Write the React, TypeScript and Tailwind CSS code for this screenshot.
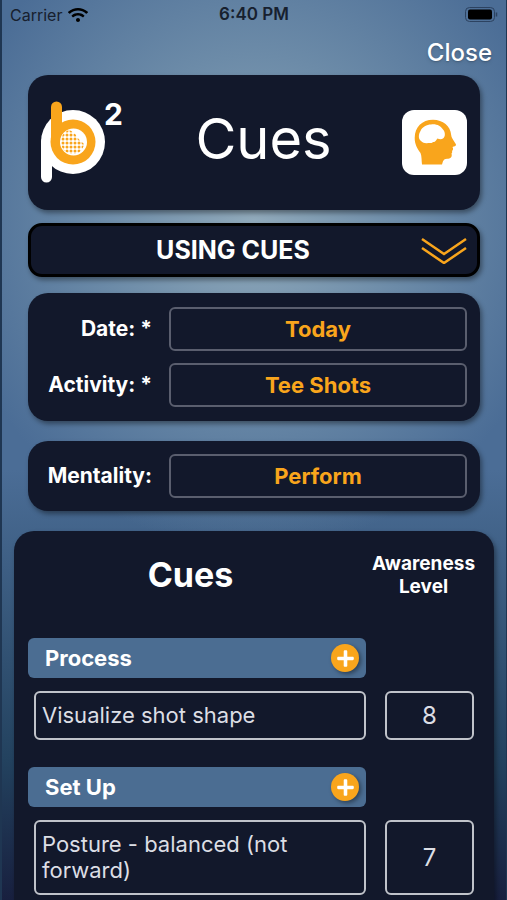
import React from 'react';
import { FaPlus, FaWifi } from 'react-icons/fa';

const sections = [
  { title: 'Process', cue: 'Visualize shot shape', rows: 1, level: '8' },
  { title: 'Set Up', cue: 'Posture - balanced (not forward)', rows: 2, level: '7' },
];

const Logo: React.FC = () => (
  <svg width="84" height="104" viewBox="0 -10 84 104" className="overflow-visible" role="img" aria-label="pb squared">
    <defs>
      <pattern id="dimples" width="4" height="4" patternUnits="userSpaceOnUse">
        <circle cx="2" cy="2" r="1.5" fill="#f9a51c" />
      </pattern>
    </defs>
    <circle cx="32" cy="41" r="32" fill="#fff" />
    <path d="M5.500 41V76" stroke="#fff" strokeWidth="11" strokeLinecap="round" />
    <circle cx="32" cy="41" r="22.500" fill="#f9a51c" />
    <path d="M15.500 6V41" stroke="#f9a51c" strokeWidth="11" strokeLinecap="round" />
    <circle cx="32.500" cy="41" r="13.500" fill="#fff" />
    <path d="M28 29C31 30 34 32 36 36C38 39 41 41 43 43C42 49 38 53 32 53C25 53 20 48 20 41C20 35 23 31 28 29Z" fill="url(#dimples)" />
    <text x="63" y="24" fill="#fff" fontFamily="Inter, sans-serif" fontSize="30" fontWeight="700">2</text>
  </svg>
);

const HeadIcon: React.FC = () => (
  <svg className="size-[65px] shrink-0 rounded-xl bg-white" viewBox="0 0 65 65" aria-hidden="true">
    <path
      d="M20 54.500C19.500 51 19.800 46 18.500 43C15 38 12.700 34 12.700 28C12.700 17 20 9.700 31 9.700C41 9.700 48.500 16 49.200 25C49.300 28 53 32 54 34.500C54.300 36 52 36.500 50.500 37C51.500 39 51 40 50 41C50.500 42 50 43 49.500 43.500C50.500 47 48.500 48.800 45 48.800C41 48.800 41 52 40 54.500Z"
      fill="#f9a51c"
    />
    <path
      d="M19 31C16 29 16.500 24 18.500 21C20 17 25 14.500 29 14.500C34 13.500 39 16 41 19.500C43.500 22 43.500 27 41 28.500C39 30 37 29 35.500 28.500C34 30 34 32 31 32C29.500 34 28 32.500 26 33C23.500 33.500 21 33 19 31Z"
      fill="#fff"
    />
  </svg>
);

const Field: React.FC<{ id: string; label: string; value: string }> = ({ id, label, value }) => (
  <div className="flex items-center">
    <label htmlFor={id} className="w-[111px] shrink-0 text-right text-[21px] font-bold whitespace-nowrap">
      {label}
    </label>
    <input
      id={id}
      type="text"
      defaultValue={value}
      className="ml-[17px] h-11 min-w-0 flex-1 rounded-md border-2 border-[#5a5e6e] bg-transparent text-center text-[22px] font-bold text-[#f9a51c]"
    />
  </div>
);

const App: React.FC = () => {
  return (
    <div className="flex min-h-screen flex-col border-r border-l-2 border-[#1f3652] bg-[radial-gradient(ellipse_310px_330px_at_50%_220px,#91aabb_0%,#6c8ba8_50%,#4b6d9600_100%),linear-gradient(to_bottom,#4b6d96_0px,#4b6d96_470px,#23425f_760px,#18203f_900px)] font-['Inter',sans-serif] text-white">
      {/* Status bar */}
      <div className="grid h-[30px] grid-cols-3 items-center pr-2 pl-2 text-[17px] text-[#17202e]">
        <div className="flex items-center gap-[6px] text-base">
          Carrier
          <FaWifi size={20} className="text-black" />
        </div>
        <span className="text-center font-semibold">6:40 PM</span>
        <svg className="justify-self-end" width="33" height="16" viewBox="0 0 33 16" aria-hidden="true">
          <rect x="0.500" y="0.500" width="29" height="14" rx="4" fill="none" stroke="#2c4260" />
          <rect x="3" y="2.500" width="24" height="10" rx="2" fill="#000" />
          <path d="M31.500 5.500v4" stroke="#2c4260" strokeWidth="1.500" />
        </svg>
      </div>

      <div className="flex h-[45px] items-center justify-end pr-[14px]">
        <button type="button" className="text-2xl font-medium text-shadow-md">Close</button>
      </div>

      <header className="mx-[26px] flex h-[135px] items-center rounded-[20px] bg-[#12182b] px-[13px] shadow-[2px_3px_5px_#0006]">
        <Logo />
        <h1 className="flex-1 pb-2 text-center text-[56px]">Cues</h1>
        <HeadIcon />
      </header>

      <button
        type="button"
        className="mx-[26px] mt-[13px] flex h-[54px] items-center rounded-[14px] border-3 border-black bg-[#12182b] px-[10px] shadow-[2px_3px_5px_#0006]"
      >
        <span className="flex-1 pt-[2px] pl-1 text-[25px] font-bold">USING CUES</span>
        <svg width="46" height="28" viewBox="0 0 46 28" fill="none" stroke="#f9a51c" strokeWidth="2.500" aria-hidden="true">
          <path d="M1 3L23 18L45 3M1 12L23 27L45 12" />
        </svg>
      </button>

      {/* Session details */}
      <section className="mx-[26px] mt-4 flex flex-col gap-3 rounded-[20px] bg-[#12182b] px-[13px] py-[14px] shadow-[2px_3px_5px_#0006]">
        <Field id="date" label="Date: *" value="Today" />
        <Field id="activity" label="Activity: *" value="Tee Shots" />
      </section>
      <section className="mx-[26px] mt-5 rounded-[20px] bg-[#12182b] p-[13px] shadow-[2px_3px_5px_#0006]">
        <Field id="mentality" label="Mentality:" value="Perform" />
      </section>

      {/* Cue list */}
      <section className="mx-3 mt-5 flex-1 rounded-t-[20px] bg-[#12182b] pb-1 shadow-[2px_3px_5px_#0006]">
        <div className="flex items-center pt-[21px] pr-[14px] pb-10">
          <h2 className="flex-1 text-center text-[34px] leading-[46px] font-bold">Cues</h2>
          <p className="w-[113px] text-center text-[19px] leading-[23px] font-bold">Awareness Level</p>
        </div>
        <div className="flex flex-col gap-[27px] pr-5 pl-[14px]">
          {sections.map((s) => (
            <div key={s.title}>
              <div className="mr-[108px] flex h-10 items-center justify-between rounded-md bg-[#4b6d92] pr-[7px] pl-[17px]">
                <h3 className="text-[22px] font-bold">{s.title}</h3>
                <button
                  type="button"
                  aria-label={`Add ${s.title} cue`}
                  className="flex size-7 items-center justify-center rounded-full bg-[#f9a51c] shadow-[2px_2px_4px_#0006]"
                >
                  <FaPlus size={19} />
                </button>
              </div>
              <div className="mt-[13px] flex gap-[19px] pl-[6px]">
                <textarea
                  aria-label={`${s.title} cue`}
                  rows={s.rows}
                  defaultValue={s.cue}
                  className="block min-w-0 flex-1 resize-none overflow-hidden rounded-md border-2 border-[#c0c3ca] bg-transparent px-[6px] pt-[9px] pb-[10px] text-[22px] leading-[26px] text-[#dcdee5]"
                />
                <input
                  aria-label={`${s.title} awareness level`}
                  type="text"
                  defaultValue={s.level}
                  className="w-[89px] rounded-md border-2 border-[#c0c3ca] bg-transparent text-center text-2xl text-[#dcdee5]"
                />
              </div>
            </div>
          ))}
        </div>
      </section>
    </div>
  );
};

export default App;
